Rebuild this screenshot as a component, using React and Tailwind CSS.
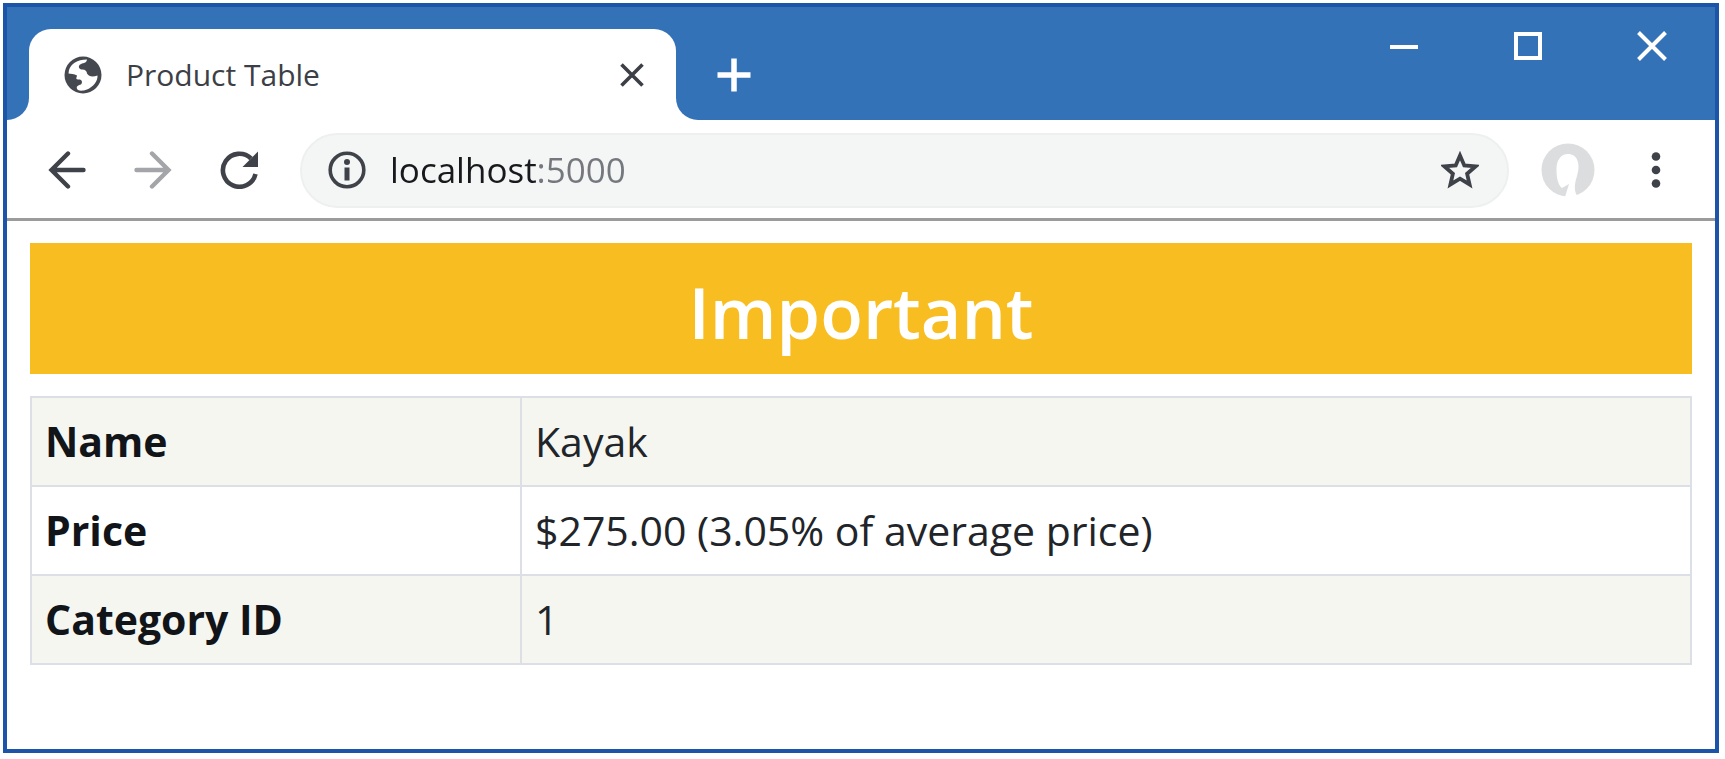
const rows = [
  ["Name", "Kayak"],
  ["Price", "$275.00 (3.05% of average price)"],
  ["Category ID", "1"],
];

function Icon({ className = "size-[38px]", children, ...rest }) {
  return (
    <svg viewBox="0 0 38 38" fill="none" stroke="currentColor" className={`shrink-0 ${className}`} aria-hidden="true" {...rest}>
      {children}
    </svg>
  );
}

function TitleBar() {
  return (
    <header className="flex h-[113px] items-end bg-[#3372b7] text-white">
      <div className="size-[22px] shrink-0 bg-white">
        <div className="size-full rounded-br-[22px] bg-[#3372b7]" />
      </div>
      <div className="flex h-[91px] w-[647px] items-center rounded-t-[22px] bg-white pr-[32px] pl-[35px] text-[#3c4046]">
        <Icon>
          <circle cx="19" cy="19" r="18.5" fill="#45494f" stroke="none" />
          <path
            d="M5 14C7 8 13 3.500 23 3.500C23 6 21 7 18 7.500C14 9 14 12 17 13.500C21 13 23 15 23 17.500C25 21 29 21 33.500 19.500C34 25 29 31 23 33.500C19 35 16 35 14 34C11 31 14 29 17 28.500C19 26 18 23 14 23.500C11 23 13 21 13 19.500C10 17.500 7 18 4.500 17.500Z"
            fill="white"
            stroke="none"
          />
        </Icon>
        <h1 className="ml-[24px] flex-1 text-[30px]">Product Table</h1>
        <button type="button" aria-label="Close tab" className="flex">
          <svg viewBox="0 0 24 24" className="size-[24px]" stroke="currentColor" strokeWidth="3.6">
            <path d="M1.500 1.500L22.500 22.500M22.500 1.500L1.500 22.500" />
          </svg>
        </button>
      </div>
      <div className="size-[22px] shrink-0 bg-white">
        <div className="size-full rounded-bl-[22px] bg-[#3372b7]" />
      </div>
      <button type="button" aria-label="New tab" className="ml-[19px] flex h-[91px] items-center">
        <svg viewBox="0 0 34 34" className="size-[34px]" stroke="currentColor" strokeWidth="5.500">
          <path d="M0.500 17H33.500M17 0.500V33.500" />
        </svg>
      </button>
      <div className="ml-auto flex h-[78px] self-start pr-px">
        <button type="button" aria-label="Minimize" className="flex w-[124px] items-center justify-center">
          <Icon strokeWidth="4">
            <path d="M5 20H33" />
          </Icon>
        </button>
        <button type="button" aria-label="Maximize" className="flex w-[124px] items-center justify-center">
          <Icon strokeWidth="4">
            <path d="M7 7H31V31H7Z" />
          </Icon>
        </button>
        <button type="button" aria-label="Close window" className="flex w-[124px] items-center justify-center">
          <Icon strokeWidth="4">
            <path d="M5.500 5.500L32.500 32.500M32.500 5.500L5.500 32.500" />
          </Icon>
        </button>
      </div>
    </header>
  );
}

function Toolbar() {
  return (
    <nav className="flex h-[101px] items-center border-b-[3px] border-[#9b9b9b] bg-white pt-[2px] pr-[40px] pl-[41px] text-[#3f4249]">
      <div className="flex gap-[48px]">
        <button type="button" aria-label="Back">
          <Icon strokeWidth="4.400" strokeLinecap="round">
            <path d="M35.500 19H4M20 2.500L3.500 19L20 35.500" />
          </Icon>
        </button>
        <button type="button" aria-label="Forward" className="text-[#a3a5a8]">
          <Icon strokeWidth="4.400" strokeLinecap="round">
            <path d="M2.500 19H34M18 2.500L34.500 19L18 35.500" />
          </Icon>
        </button>
        <button type="button" aria-label="Reload">
          <Icon strokeWidth="4.600">
            <path d="M35.500 23A16.500 16.500 0 1 1 31 7.500" />
            <path d="M38 0.500V16H22.500Z" fill="currentColor" stroke="none" />
          </Icon>
        </button>
      </div>
      <div className="mr-[32px] ml-[42px] flex h-[75px] flex-1 items-center rounded-full border-2 border-[#eeefef] bg-[#f4f6f6] pr-[28px] pl-[26px]">
        <Icon strokeWidth="3.600">
          <circle cx="19" cy="19" r="16.800" />
          <path d="M19 16.500V29.500" strokeWidth="5" />
          <circle cx="19" cy="11" r="3" fill="currentColor" stroke="none" />
        </Icon>
        <input
          type="text"
          aria-label="Address"
          defaultValue="localhost:5000"
          className="ml-[24px] min-w-0 flex-1 bg-[linear-gradient(to_right,#17191c_147px,#74777c_147px)] bg-clip-text text-[35px] text-transparent caret-black outline-none"
        />
        <button type="button" aria-label="Bookmark this page">
          <Icon strokeWidth="3.800">
            <path d="M19 4.500L23.300 14.400L34.500 15.400L26.100 22.700L28.600 33.500L19 27.700L9.400 33.500L11.900 22.700L3.500 15.400L14.700 14.400Z" />
          </Icon>
        </button>
      </div>
      <button type="button" aria-label="Profile" className="mr-[42px]">
        <svg viewBox="0 0 54 54" className="size-[54px]" aria-hidden="true">
          <circle cx="27" cy="27" r="26.500" fill="#dcddde" />
          <path d="M27 11C20 11 15.500 17 15.500 26C15.500 35 17 42 21 45L28 41L24 54H37C33 49 33 42 36 33C40 20 36 11 27 11Z" fill="white" />
        </svg>
      </button>
      <button type="button" aria-label="Menu">
        <Icon fill="currentColor" stroke="none">
          <circle cx="19" cy="5.500" r="4.300" />
          <circle cx="19" cy="19" r="4.300" />
          <circle cx="19" cy="32.500" r="4.300" />
        </Icon>
      </button>
    </nav>
  );
}

export default function App() {
  return (
    <div className="flex min-h-screen bg-white pt-[3px] pr-[6px] pb-[6px] pl-[3px] font-['Open_Sans',sans-serif]">
      <div className="flex-1 border-4 border-[#1c55a8] bg-white">
        <TitleBar />
        <Toolbar />
        <main className="flex flex-col gap-[22px] px-[23px] pt-[22px] pb-[40px]">
          <h2 className="bg-[#f8bd20] pt-[26px] pb-[18px] text-center text-[70px] leading-[87px] font-semibold text-white">Important</h2>
          <table className="w-full border-collapse text-left text-[41px] leading-[55px] text-[#212529]">
            <tbody>
              {rows.map(([label, value]) => (
                <tr key={label} className="odd:bg-[#f6f6f1]">
                  <th scope="row" className="w-[490px] border-2 border-[#dcdfe6] px-[13px] py-[16px] font-bold text-[#111418]">{label}</th>
                  <td className="border-2 border-[#dcdfe6] px-[13px] py-[16px]">{value}</td>
                </tr>
              ))}
            </tbody>
          </table>
        </main>
      </div>
    </div>
  );
}
